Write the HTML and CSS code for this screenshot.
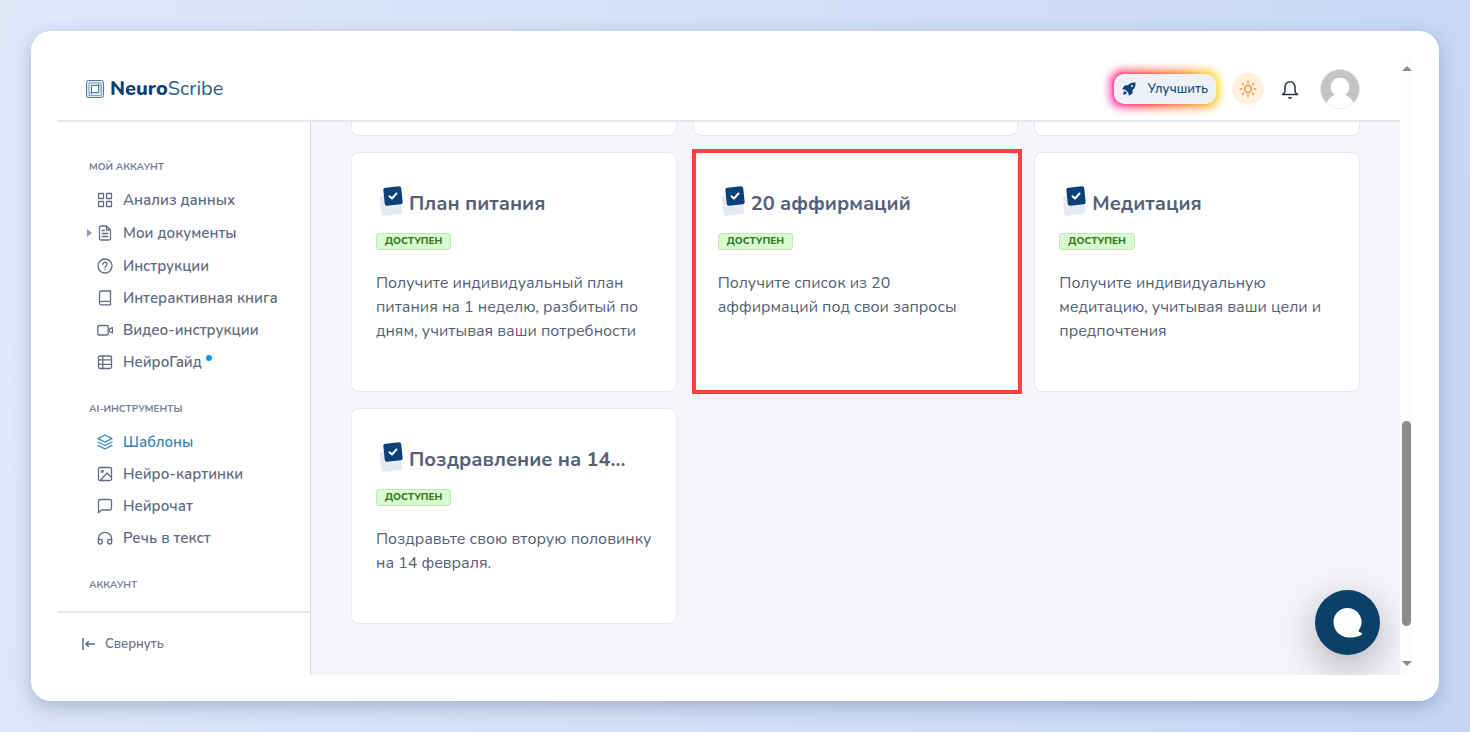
FILE: index.html
```
<!DOCTYPE html>
<html lang="ru">
<head>
<meta charset="utf-8">
<title>NeuroScribe</title>
<link rel="stylesheet" href="styles.css">
</head>
<body>
<svg class="defs" aria-hidden="true">
  <symbol id="i-card" viewBox="0 0 24 30">
    <rect x="1.5" y="9" width="21" height="20" rx="2.5" transform="rotate(-6 12 19)" fill="#e6ebf3"/>
    <rect x="5" y="1" width="18" height="18" rx="2.5" transform="rotate(-6 14 10)" fill="#0b4179"/>
    <path d="M10.500 10.200l2.500 2.300 4.500-5" fill="none" stroke="#fff" stroke-width="2" stroke-linecap="round" stroke-linejoin="round"/>
  </symbol>
</svg>
<div class="window">
  <div class="app">
    <header class="topbar">
      <a class="logo" href="#">
        <svg viewBox="0 0 18 18" width="18" height="18" fill="none" stroke="#557d98"><rect x=".5" y=".5" width="17" height="17" rx="2" fill="#dce8ef"/><path d="M3 15V3h12v9.500M2.500 15.500h12.800V5.500M5.500 14V5.500h10M3.500 12.500h9V3.500" stroke="#8ba8bb"/><path d="M5.500 14V5.500H13M12.500 4v8.500H5.500" stroke="#557d98"/><rect x="6.500" y="6.500" width="5.500" height="5.500" fill="#fff" stroke="none"/></svg>
        <span><b>Neuro</b>Scribe</span>
      </a>
      <div class="actions">
        <button class="upgrade" type="button">
          <svg viewBox="0 0 14 14" width="14" height="14" fill="#0b4179"><path d="M13.500.500C10 .200 7.800 1.200 6 3.200L2.500 3.500.200 7.300l3.200.500 2.800 2.800.700 3.200 3.500-2.300.300-3.500C12.800 6.200 13.800 4 13.500.500z"/><path d="M3 9c-1.400.500-1.800 1.700-1.800 3.600 1.900 0 3-.300 3.600-1.800z"/><circle cx="10" cy="4" r="1.100" fill="#eef2f8"/></svg>
          Улучшить
        </button>
        <button class="theme" type="button" aria-label="Тема">
          <svg viewBox="0 0 18 18" width="18" height="18" fill="none" stroke="#f59342" stroke-width="1.500" stroke-linecap="round"><circle cx="9" cy="9" r="3.400"/><path d="M9 1.200v1.600M9 15.200v1.600M1.200 9h1.600M15.200 9h1.600M3.500 3.500l1 1M13.500 13.500l1 1M14.500 3.500l-1 1M4.500 13.500l-1 1"/></svg>
        </button>
        <button class="bell" type="button" aria-label="Уведомления">
          <svg viewBox="0 0 18 20" width="18" height="20" fill="none" stroke="#2f3850" stroke-width="1.600" stroke-linecap="round" stroke-linejoin="round"><path d="M4 7a5 5.300 0 0 1 10 0v4c0 1.500.700 2.500 2.500 3.500h-15C3.300 13.500 4 12.500 4 11z"/><path d="M7.800 17.600c.800.500 1.600.500 2.400 0"/></svg>
        </button>
        <button class="avatar" type="button" aria-label="Профиль">
          <svg viewBox="0 0 40 40" width="40" height="40"><circle cx="20" cy="20" r="19.500" fill="#c4c4c4" stroke="#e4e7ef"/><path d="M6.500 34c1.500-3.500 5-7 8.500-8.200a9.300 9.300 0 1 1 10 0c3.500 1.200 7 4.700 8.500 8.200a19.300 19.300 0 0 1-27 0z" fill="#fff"/></svg>
        </button>
      </div>
    </header>
    <div class="content">
      <aside class="sidebar">
        <nav class="nav">
          <h2 class="nav-title">Мой аккаунт</h2>
          <a class="nav-item" href="#"><svg viewBox="0 0 16 16"><path d="M1.500 1.500h5v5h-5zM9.500 1.500h5v5h-5zM1.500 9.500h5v5h-5zM9.500 9.500h5v5h-5z"/></svg>Анализ данных</a>
          <a class="nav-item parent" href="#"><svg viewBox="0 0 16 16"><path d="M3.500 1h6l4 4v8.500a1.500 1.500 0 0 1-1.500 1.500H4a1.500 1.500 0 0 1-1.500-1.500V2.500A1.500 1.500 0 0 1 4 1M9.500 1v4h4M5.200 5.500h2M5.200 8.500h5.600M5.200 11.500h5.600"/></svg>Мои документы</a>
          <a class="nav-item" href="#"><svg viewBox="0 0 16 16"><circle cx="8" cy="8" r="7"/><path d="M6 6.300a2 2 0 1 1 3 1.700c-.700.400-1 .700-1 1.300M8 11.500v.200"/></svg>Инструкции</a>
          <a class="nav-item" href="#"><svg viewBox="0 0 16 16"><path d="M2.500 13V2.500A1.500 1.500 0 0 1 4 1h9.500v13.800H4.200a1.700 1.700 0 0 1 0-3.500h9.300"/></svg>Интерактивная книга</a>
          <a class="nav-item" href="#"><svg viewBox="0 0 16 16"><rect x=".8" y="3.500" width="10.400" height="9.500" rx="1"/><path d="M15.300 5.500v5.500l-3-1.500V7z"/></svg>Видео-инструкции</a>
          <a class="nav-item" href="#"><svg viewBox="0 0 16 16"><rect x="1.500" y="2" width="13" height="12.500" rx="1.500"/><path d="M1.500 5.800h13M5.800 2v12.500M1.500 10.300h13"/></svg>НейроГайд<i class="dot"></i></a>
          <h2 class="nav-title">AI-инструменты</h2>
          <a class="nav-item active" href="#"><svg viewBox="0 0 16 16"><path d="M8 1l7 3.600-7 3.500-7-3.500zM1 8l7 3.500L15 8M1 11.400L8 15l7-3.600"/></svg>Шаблоны</a>
          <a class="nav-item" href="#"><svg viewBox="0 0 16 16"><rect x="1.500" y="1.500" width="13" height="13" rx="1.500"/><circle cx="5.300" cy="5.300" r="1"/><path d="M3.500 14.300L10 7l4.500 4.500"/></svg>Нейро-картинки</a>
          <a class="nav-item" href="#"><svg viewBox="0 0 16 16"><path d="M14.500 10.500a1.500 1.500 0 0 1-1.500 1.500H4.500l-3 2.800V3A1.500 1.500 0 0 1 3 1.500h10A1.500 1.500 0 0 1 14.500 3z"/></svg>Нейрочат</a>
          <a class="nav-item" href="#"><svg viewBox="0 0 16 16"><path d="M1.300 12V9a6.700 6.700 0 0 1 13.400 0v3M1.300 12a2 2 0 1 0 4 0v-1a1.500 1.500 0 0 0-1.500-1.500H1.300zM14.700 12a2 2 0 1 1-4 0v-1a1.500 1.500 0 0 1 1.500-1.500h2.500z"/></svg>Речь в текст</a>
          <h2 class="nav-title">Аккаунт</h2>
        </nav>
        <button class="collapse" type="button">
          <svg viewBox="0 0 14 12" width="14" height="12" fill="none" stroke="#5e6e82" stroke-width="1.500"><path d="M2 0v12M14 6H5M7.800 3.200L5 6l2.800 2.800"/></svg>
          Свернуть
        </button>
      </aside>
      <main class="main">
        <div class="grid">
          <div class="card cut"></div><div class="card cut"></div><div class="card cut"></div>
          <article class="card">
            <h3><svg><use href="#i-card"/></svg><span>План питания</span></h3>
            <span class="badge">Доступен</span>
            <p>Получите индивидуальный план питания на 1 неделю, разбитый по дням, учитывая ваши потребности</p>
          </article>
          <article class="card selected">
            <h3><svg><use href="#i-card"/></svg><span>20 аффирмаций</span></h3>
            <span class="badge">Доступен</span>
            <p>Получите список из 20 аффирмаций под свои запросы</p>
          </article>
          <article class="card">
            <h3><svg><use href="#i-card"/></svg><span>Медитация</span></h3>
            <span class="badge">Доступен</span>
            <p>Получите индивидуальную медитацию, учитывая ваши цели и предпочтения</p>
          </article>
          <article class="card">
            <h3><svg><use href="#i-card"/></svg><span>Поздравление на 14...</span></h3>
            <span class="badge">Доступен</span>
            <p>Поздравьте свою вторую половинку на 14 февраля.</p>
          </article>
        </div>
        <button class="chat" type="button" aria-label="Чат">
          <svg viewBox="0 0 30 31" width="30" height="31" fill="#fff"><path d="M14.500 1a14 14 0 0 1 11.500 22c-.600 1-.500 1.600.500 2l2.500 1-.500 2C24 30 19 30.800 15 30.500 6 29.500.500 23 .500 15a14 14 0 0 1 14-14z"/></svg>
        </button>
      </main>
    </div>
  </div>
  <div class="scrollbar">
    <i class="arrow up"></i>
    <div class="track"><i class="thumb"></i></div>
    <i class="arrow down"></i>
  </div>
</div>
</body>
</html>
```
FILE: styles.css
```
* { box-sizing: border-box; }

body {
  margin: 0;
  height: 100vh;
  padding: 31px;
  display: flex;
  background: linear-gradient(100deg, #e0e8f8, #c6d6f6);
  font-family: "Nunito", "Lato", "Open Sans", sans-serif;
  color: #566077;
}

button { border: 0; padding: 0; background: none; font: inherit; color: inherit; }
a { color: inherit; text-decoration: none; }
svg { flex: none; display: block; }
.defs { position: absolute; width: 0; height: 0; }

.window {
  flex: 1;
  display: flex;
  padding: 26px;
  border-radius: 20px;
  background: #fff;
  box-shadow: 0 6px 18px rgba(60, 80, 120, .32);
  isolation: isolate;
}

.app { flex: 1; min-width: 0; display: flex; flex-direction: column; }

.topbar {
  flex: none;
  height: 65px;
  padding: 0 40px 0 29px;
  display: flex;
  align-items: center;
  justify-content: space-between;
  border-bottom: 2px solid #e4e7ef;
}

.logo { display: flex; align-items: center; gap: 6px; font-size: 20px; color: #2e5f8e; }
.logo b { color: #0b4179; font-weight: 800; }

.actions { display: flex; align-items: center; }

.upgrade {
  display: flex;
  align-items: center;
  gap: 11px;
  height: 30px;
  padding: 0 8px;
  border-radius: 10px;
  background: #eef2f8;
  color: #22507f;
  font-size: 13px;
  font-weight: 600;
  position: relative;
}
.upgrade::before, .upgrade::after {
  content: "";
  position: absolute;
  inset: -4px;
  z-index: -1;
  border-radius: 12px;
  background: linear-gradient(75deg, #ff3fbb, #ff5a55 30%, #ff9a48 70%, #fff04a);
  filter: blur(4px);
}
.upgrade::after { inset: -1px; filter: blur(1px); }

.theme {
  width: 32px;
  height: 32px;
  margin-left: 16px;
  border-radius: 50%;
  background: #fff1de;
  display: grid;
  place-items: center;
}
.bell { margin: 2px 21px 0 17px; }

.content { flex: 1; min-height: 0; display: flex; }

.sidebar {
  flex: none;
  width: 254px;
  display: flex;
  flex-direction: column;
  border-right: 1px solid #d0d6e6;
}

.nav { flex: 1; min-height: 0; overflow: hidden; padding: 37px 0 0 32px; }

.nav-title {
  margin: 23px 0 9px;
  font-size: 10px;
  line-height: 16px;
  font-weight: 700;
  text-transform: uppercase;
  color: #75819a;
}
.nav-title:first-child { margin-top: 0; }

.nav-item {
  display: flex;
  align-items: center;
  gap: 10px;
  padding-left: 8px;
  height: 32px;
  font-size: 15px;
  font-weight: 600;
  color: #626c82;
  position: relative;
}
.nav-item svg {
  width: 16px;
  height: 16px;
  fill: none;
  stroke: #626d86;
  stroke-width: 1.3;
  stroke-linecap: round;
  stroke-linejoin: round;
}
.nav-item.parent::before {
  content: "";
  position: absolute;
  left: -2px;
  border: 4px solid transparent;
  border-left: 5px solid #9199b5;
  border-right: 0;
}
.nav-item.parent { height: 34px; }
.nav-item.active { color: #3d87b5; }
.nav-item.active svg { stroke: #3d8cba; }
.dot { width: 6px; height: 6px; margin: 0 0 8px -6px; border-radius: 50%; background: #0a96f5; }

.collapse {
  flex: none;
  height: 64px;
  padding: 0 0 0 24px;
  display: flex;
  align-items: center;
  gap: 10px;
  border-top: 2px solid #e4e7ef;
  font-size: 13px;
  font-weight: 600;
  color: #6a7790;
}

.main {
  flex: 1;
  min-width: 0;
  overflow: hidden;
  padding: 0 40px;
  background: #f5f6fb;
  position: relative;
}

.grid { display: grid; grid-template-columns: repeat(3, 1fr); gap: 16px; }

.card {
  padding: 36px 24px 48px;
  border: 1px solid #e4e8f0;
  border-radius: 8px;
  background: #fff;
  position: relative;
}
.card.cut { height: 14px; padding: 0; border-top: 0; border-radius: 0 0 8px 8px; }
.card.selected::after {
  content: "";
  position: absolute;
  inset: -4px -5px -3px -2px;
  border: 4px solid #ff4040;
}

.card h3 {
  height: 30px;
  margin: 0 0 14px;
  display: flex;
  align-items: center;
  gap: 6px;
  padding-left: 3px;
  font-size: 20px;
  line-height: 30px;
  font-weight: 700;
  color: #566078;
}
.card h3 svg { width: 24px; height: 30px; margin-bottom: 6px; }

.badge {
  display: block;
  width: fit-content;
  margin-bottom: 21px;
  padding: 0 8px;
  border: 1px solid #bfe9b4;
  border-radius: 3px;
  background: #d9fbd0;
  color: #2f7d22;
  font-size: 10px;
  line-height: 15px;
  font-weight: 800;
  text-transform: uppercase;
}

.card p { margin: 0 -4px 0 0; font-size: 16px; line-height: 24px; }
.card.selected p { margin-right: 16px; }

.chat {
  position: absolute;
  right: 20px;
  bottom: 20px;
  width: 65px;
  height: 65px;
  border-radius: 50%;
  background: #0b4068;
  display: grid;
  place-items: center;
  box-shadow: 0 12px 40px rgba(0, 0, 0, .3);
}

.scrollbar {
  flex: none;
  width: 13px;
  padding: 9px 0;
  display: flex;
  flex-direction: column;
  align-items: center;
  background: #fcfcfc;
}
.arrow { border: 5px solid transparent; }
.arrow.up { border-top: 0; border-bottom-color: #8b8b8b; }
.arrow.down { border-bottom: 0; border-top-color: #8b8b8b; }
.track { flex: 1; display: flex; flex-direction: column; justify-content: flex-end; padding-bottom: 35px; }
.thumb { width: 9px; height: 37%; border-radius: 5px; background: #8b8b8b; }
```
